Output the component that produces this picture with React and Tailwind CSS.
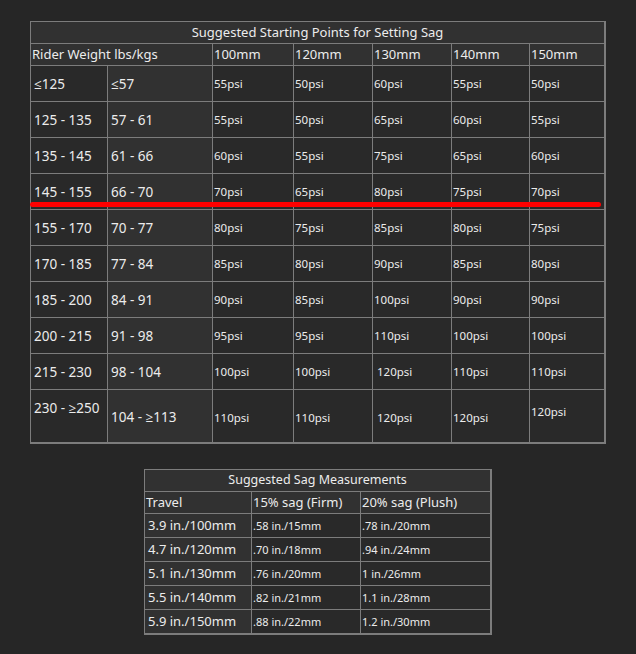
import React from "react";

const rows = [
  ["≤125", "≤57", "55psi", "50psi", "60psi", "55psi", "50psi"],
  ["125 - 135", "57 - 61", "55psi", "50psi", "65psi", "60psi", "55psi"],
  ["135 - 145", "61 - 66", "60psi", "55psi", "75psi", "65psi", "60psi"],
  ["145 - 155", "66 - 70", "70psi", "65psi", "80psi", "75psi", "70psi"],
  ["155 - 170", "70 - 77", "80psi", "75psi", "85psi", "80psi", "75psi"],
  ["170 - 185", "77 - 84", "85psi", "80psi", "90psi", "85psi", "80psi"],
  ["185 - 200", "84 - 91", "90psi", "85psi", "100psi", "90psi", "90psi"],
  ["200 - 215", "91 - 98", "95psi", "95psi", "110psi", "100psi", "100psi"],
  ["215 - 230", "98 - 104", "100psi", "100psi", "120psi", "110psi", "110psi"],
];

const sag = [
  ["3.9 in./100mm", ".58 in./15mm", ".78 in./20mm"],
  ["4.7 in./120mm", ".70 in./18mm", ".94 in./24mm"],
  ["5.1 in./130mm", ".76 in./20mm", "1 in./26mm"],
  ["5.5 in./140mm", ".82 in./21mm", "1.1 in./28mm"],
  ["5.9 in./150mm", ".88 in./22mm", "1.2 in./30mm"],
];

const light = "bg-[#313131]";
const dark = "bg-[#292929]";

export default function App() {
  return (
    <div
      className="w-[636px] h-[654px] bg-[#262626] flex flex-col items-center pt-[21px] text-[#ececec]"
      style={{ fontFamily: '"Noto Sans", "Open Sans", sans-serif' }}
    >
      <div className="relative">
        <div className="grid grid-cols-[76px_104px_80px_78px_78px_77px_74px] auto-rows-auto gap-px bg-[#7c7c7c] pt-px pl-px pr-[2px] pb-[2px]">
          <div className={`col-span-7 h-[21px] ${light} flex items-center justify-center text-[13px] leading-none`}>
            Suggested Starting Points for Setting Sag
          </div>
          <div className={`col-span-2 h-[21px] ${light} flex items-center pl-[1px] text-[13px] leading-none`}>
            Rider Weight lbs/kgs
          </div>
          {["100mm", "120mm", "130mm", "140mm", "150mm"].map((h) => (
            <div key={h} className={`h-[21px] ${light} flex items-center pl-[1px] text-[13px] leading-none`}>
              {h}
            </div>
          ))}
          {rows.map((r, i) => (
            <React.Fragment key={i}>
              <div className={`h-[35px] ${dark} flex items-center pt-[2px] pl-[3px] text-[13.5px] leading-none`}>{r[0]}</div>
              <div className={`h-[35px] ${light} flex items-center pt-[2px] pl-[3px] text-[13.5px] leading-none`}>{r[1]}</div>
              {r.slice(2).map((v, j) => (
                <div
                  key={j}
                  className={`h-[35px] ${dark} flex items-center pt-[1px] ${i === 8 && j === 2 ? "pl-[4px]" : "pl-[1px]"} text-[11.5px] leading-none`}
                >
                  {v}
                </div>
              ))}
            </React.Fragment>
          ))}
          <div className={`h-[52px] ${dark} flex items-start pt-[12px] pl-[3px] text-[13.5px] leading-none`}>230 - ≥250</div>
          <div className={`h-[52px] ${light} flex items-start pt-[21px] pl-[3px] text-[13.5px] leading-none`}>104 - ≥113</div>
          <div className={`h-[52px] ${dark} flex items-start pt-[22px] pl-[1px] text-[11.5px] leading-none`}>110psi</div>
          <div className={`h-[52px] ${dark} flex items-start pt-[22px] pl-[1px] text-[11.5px] leading-none`}>110psi</div>
          <div className={`h-[52px] ${dark} flex items-start pt-[22px] pl-[4px] text-[11.5px] leading-none`}>120psi</div>
          <div className={`h-[52px] ${dark} flex items-start pt-[22px] pl-[1px] text-[11.5px] leading-none`}>120psi</div>
          <div className={`h-[52px] ${dark} flex items-start pt-[16px] pl-[1px] text-[11.5px] leading-none`}>120psi</div>
        </div>
        <div className="absolute left-0 top-[181px] w-[571px] h-[5px] rounded-full bg-[#ff0000]" />
      </div>

      <div className="mt-[25px] grid grid-cols-[106px_108px_129px] gap-px bg-[#7c7c7c] pt-px pl-px pr-[2px] pb-[2px]">
        <div className={`col-span-3 h-[21px] ${light} flex items-center justify-center text-[12.5px] leading-none`}>
          Suggested Sag Measurements
        </div>
        <div className={`h-[21px] ${light} flex items-center pl-[1px] text-[13px] leading-none`}>Travel</div>
        <div className={`h-[21px] ${light} flex items-center pl-[1px] text-[13px] leading-none`}>15% sag (Firm)</div>
        <div className={`h-[21px] ${light} flex items-center pl-[1px] text-[13px] leading-none`}>20% sag (Plush)</div>
        {sag.map((r, i) => (
          <React.Fragment key={i}>
            <div className={`h-[23px] ${light} flex items-center pl-[3px] text-[13px] leading-none`}>{r[0]}</div>
            <div className={`h-[23px] ${dark} flex items-center pl-[1px] text-[11px] leading-none`}>{r[1]}</div>
            <div className={`h-[23px] ${dark} flex items-center pl-[1px] text-[11px] leading-none`}>{r[2]}</div>
          </React.Fragment>
        ))}
      </div>
    </div>
  );
}
